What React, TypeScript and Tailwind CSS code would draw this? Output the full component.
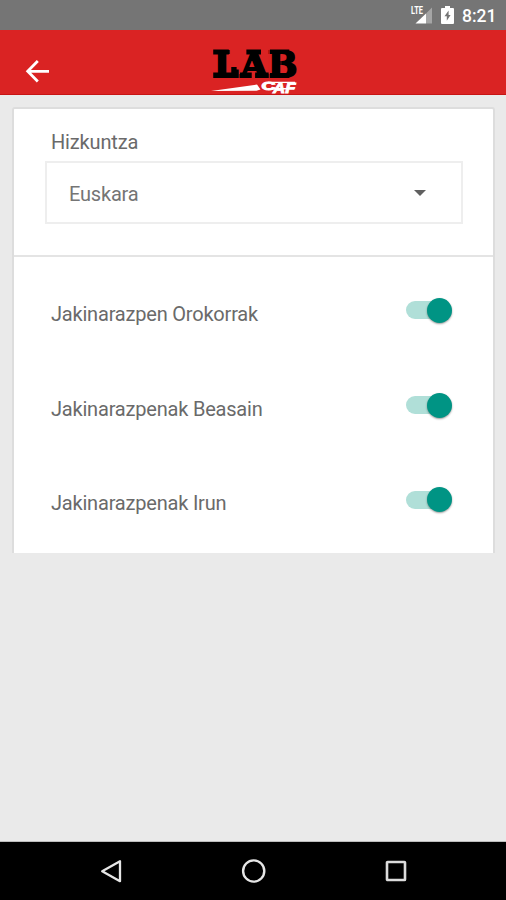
import React, { useState } from 'react';

interface ToggleRowProps {
  label: string;
  checked: boolean;
  onChange: () => void;
}

function StatusBar() {
  return (
    <div className="flex h-[30px] items-center justify-end bg-[#757575] pr-[10px] text-white">
      <svg className="h-[20px] w-[24px] overflow-visible" viewBox="0 0 24 20" fill="#fff">
        <path d="M23 2.5v16h-6V8.5z" opacity="0.35" />
        <path d="M17 8.5v10H6.5z" />
        <text x="2" y="9.2" fontSize="10" fontWeight="700" textLength="12" lengthAdjust="spacingAndGlyphs">LTE</text>
      </svg>
      <svg className="ml-[8px] mr-[8px] h-[18px] w-[13px]" viewBox="0 0 13 18">
        <path d="M4 0h5v2h3q1 0 1 1v14q0 1-1 1H1q-1 0-1-1V3q0-1 1-1h3z" fill="#fff" />
        <path d="M7.6 4.5 3.5 10.3h2.3v4.5L9.6 9H7.6z" fill="#757575" />
      </svg>
      <span className="w-[34px] pt-[1px] text-[17.5px] font-medium leading-[20px]">8:21</span>
    </div>
  );
}

function Logo() {
  return (
    <svg className="h-[48px] w-[88px] overflow-visible" viewBox="0 0 88 48">
      <g fill="#000" transform="translate(0.3 -0.9) scale(0.975 1)">
        <text
          x="3.6 31 59" y="31" fontFamily="DejaVu Serif" fontWeight="700" fontSize="36"
          stroke="#000" strokeWidth="1.8"
        >
          LAB
        </text>
        {/* slabs that thicken the serifs */}
        <path d="M3 3.5h16v5H3zM3 26.5h23v5.5H3zM21.5 21h5.5v11h-5.5zM37 3.5h15v5H37zM30.5 26.5h12v5.5h-12zM46 26.5h14v5.5H46zM61 3.5h20v4.5H61zM61 27h20v5H61z" />
      </g>
      <path d="M71 8v18" stroke="#da2323" strokeWidth="0.8" opacity="0.5" />
      <path d="M59.3 2v30" stroke="#da2323" strokeWidth="0.9" />
      <path d="M1 44 47 37.5l3.5 5-4 1.2z" fill="#fff" />
      <g fill="#fff" stroke="#fff" strokeWidth="0.9" fontFamily="Liberation Sans" fontWeight="700">
        <text x="51.5" y="42.8" fontSize="11.5" textLength="14" lengthAdjust="spacingAndGlyphs">C</text>
        <text x="63" y="46.2" fontSize="15.5" textLength="22.5" lengthAdjust="spacingAndGlyphs" fontStyle="italic">AF</text>
      </g>
      <path d="M58 35.4h27M58 41.8h26" stroke="#fff" strokeWidth="1.4" />
    </svg>
  );
}

function Header() {
  return (
    <header className="flex h-[65px] items-start border-b border-[#c71414] bg-[#da2323] pt-[17px]">
      <button className="ml-[25px] mt-[12px]" aria-label="Back">
        <svg className="h-[24px] w-[25px]" viewBox="0 0 25 24" fill="none" stroke="#fff" strokeWidth="2.8">
          <path d="M24 12.3H3M12.8 2 2.7 12.3l10.1 10.2" />
        </svg>
      </button>
      <div className="ml-[160px]">
        <Logo />
      </div>
    </header>
  );
}

function ToggleRow({ label, checked, onChange }: ToggleRowProps) {
  return (
    <div className="flex h-[94.7px] items-center justify-between pl-[37px] pr-[41px]">
      <span className="pt-[7px] text-[20px] leading-[28px] tracking-[-0.2px] text-[#6a6a6a]">{label}</span>
      <button role="switch" aria-checked={checked} aria-label={label} onClick={onChange} className="flex w-[46px] items-center">
        <span className="h-[18px] w-[34px] rounded-full bg-[#b0dfd8]" />
        <span className="-ml-[13px] h-[25px] w-[25px] shrink-0 rounded-full bg-[#009484] shadow-[0_1px_2px_rgba(0,0,0,0.4)]" />
      </button>
    </div>
  );
}

function NavBar() {
  return (
    <nav className="flex h-[58px] items-center justify-between bg-black pl-[99px] pr-[97px]">
      <svg className="h-[26px] w-[26px]" viewBox="0 0 26 26" fill="none" stroke="#e6e6e6" strokeWidth="2.3">
        <path d="M21 3.2v20L3.2 13.2z" strokeLinejoin="round" />
      </svg>
      <svg className="h-[26px] w-[26px]" viewBox="0 0 26 26" fill="none" stroke="#e6e6e6" strokeWidth="2.4">
        <circle cx="12.7" cy="13" r="10.6" />
      </svg>
      <svg className="h-[26px] w-[26px]" viewBox="0 0 26 26" fill="none" stroke="#dcdcdc" strokeWidth="2.6">
        <rect x="4" y="4" width="18" height="18" rx="0.6" />
      </svg>
    </nav>
  );
}

export default function App() {
  const [settings, setSettings] = useState([
    { label: 'Jakinarazpen Orokorrak', checked: true },
    { label: 'Jakinarazpenak Beasain', checked: true },
    { label: 'Jakinarazpenak Irun', checked: true },
  ]);

  const toggle = (index: number) => {
    setSettings(settings.map((s, i) => (i === index ? { ...s, checked: !s.checked } : s)));
  };

  return (
    <div className="flex h-[900px] w-[506px] flex-col overflow-hidden bg-[#eaeaea] font-['Roboto',sans-serif]">
      <StatusBar />
      <Header />

      <main className="flex-1 border-b border-[#bdbdbd] pl-[12px] pr-[11px] pt-[12px]">
        <div className="h-[446px] rounded-t-[3px] border-x-2 border-t-2 border-[#dddddd] bg-white">
          <div className="h-[148px] border-b-2 border-[#e4e4e4] px-[31px] pt-[19px] text-[20px] leading-[28px] text-[#6a6a6a]">
            <div className="pl-[6px] tracking-[-0.16px]">Hizkuntza</div>
            <button className="mt-[5px] flex h-[63px] w-[418px] items-center justify-between border-2 border-[#eeeeee] pl-[22px] pr-[35px]">
              <span className="pt-[2px] tracking-[-0.2px] text-[#757575]">Euskara</span>
              <svg className="h-[6px] w-[12px]" viewBox="0 0 12 6" fill="#606060">
                <path d="M0 0h12L6 6z" />
              </svg>
            </button>
          </div>

          <div className="pt-[6px]">
            {settings.map((s, i) => (
              <ToggleRow key={s.label} label={s.label} checked={s.checked} onChange={() => toggle(i)} />
            ))}
          </div>
        </div>
      </main>

      <NavBar />
    </div>
  );
}
